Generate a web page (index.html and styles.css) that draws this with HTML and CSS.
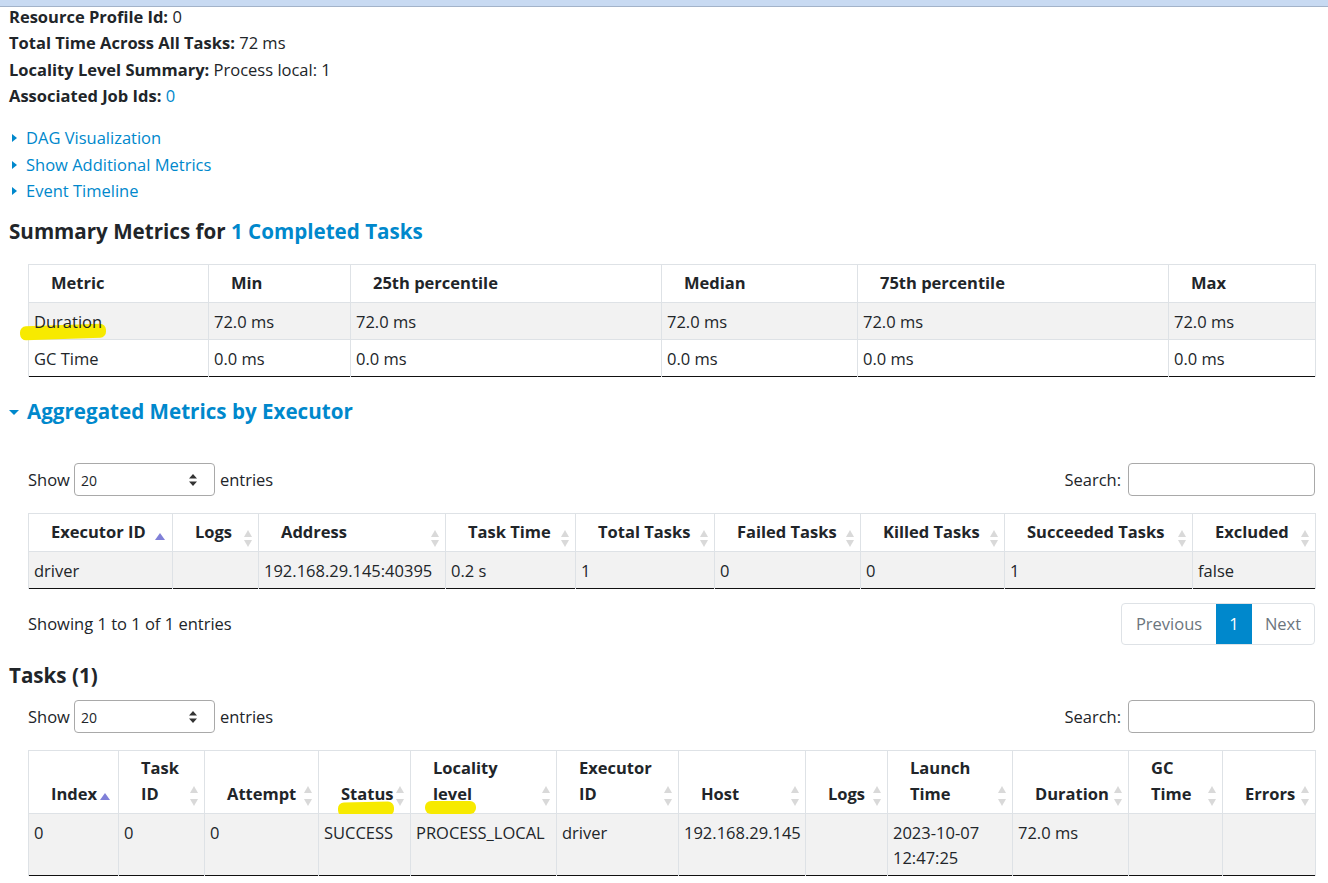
FILE: index.html
```html
<!DOCTYPE html>
<html lang="en">
<head>
<meta charset="utf-8">
<title>Stage details</title>
<link rel="stylesheet" href="styles.css">
</head>
<body>
<div class="topbar"></div>
<main class="page">
  <ul class="summary">
    <li><strong>Resource Profile Id:</strong> 0</li>
    <li><strong>Total Time Across All Tasks:</strong> 72 ms</li>
    <li><strong>Locality Level Summary:</strong> Process local: 1</li>
    <li><strong>Associated Job Ids:</strong> <a href="#">0</a></li>
  </ul>

  <ul class="toggles">
    <li><span class="arrow-right"></span><a href="#">DAG Visualization</a></li>
    <li><span class="arrow-right"></span><a href="#">Show Additional Metrics</a></li>
    <li><span class="arrow-right"></span><a href="#">Event Timeline</a></li>
  </ul>

  <h4 class="section-title first">Summary Metrics for <a href="#">1 Completed Tasks</a></h4>

  <div class="indent">
    <table class="grid metrics">
      <thead>
        <tr><th>Metric</th><th>Min</th><th>25th percentile</th><th>Median</th><th>75th percentile</th><th>Max</th></tr>
      </thead>
      <tbody>
        <tr class="odd"><td class="marked">Duration<span class="mark mark-duration"></span></td><td>72.0 ms</td><td>72.0 ms</td><td>72.0 ms</td><td>72.0 ms</td><td>72.0 ms</td></tr>
        <tr><td>GC Time</td><td>0.0 ms</td><td>0.0 ms</td><td>0.0 ms</td><td>0.0 ms</td><td>0.0 ms</td></tr>
      </tbody>
    </table>
  </div>

  <h4 class="section-title agg"><span class="arrow-down"></span><a href="#">Aggregated Metrics by Executor</a></h4>

  <div class="indent">
    <div class="controls controls-agg">
      <label class="length">Show
        <span class="select"><span class="select-value">20</span>
          <svg class="select-arrows" width="8" height="12" viewBox="0 0 8 12"><path d="M4 0 L8 4.5 L0 4.5 Z M4 12 L8 7.5 L0 7.5 Z" fill="#333"/></svg>
        </span>
        entries</label>
      <label class="search">Search: <span class="input"></span></label>
    </div>

    <table class="grid executors sortable">
      <thead>
        <tr>
          <th class="asc">Executor ID</th><th class="sorting">Logs</th><th class="sorting">Address</th><th class="sorting">Task Time</th><th class="sorting">Total Tasks</th><th class="sorting">Failed Tasks</th><th class="sorting">Killed Tasks</th><th class="sorting">Succeeded Tasks</th><th class="sorting">Excluded</th>
        </tr>
      </thead>
      <tbody>
        <tr class="odd"><td>driver</td><td></td><td>192.168.29.145:40395</td><td>0.2 s</td><td>1</td><td>0</td><td>0</td><td>1</td><td>false</td></tr>
      </tbody>
    </table>

    <div class="info-row">
      <div class="info">Showing 1 to 1 of 1 entries</div>
      <nav class="pager">
        <span class="page-btn">Previous</span><span class="page-btn active">1</span><span class="page-btn">Next</span>
      </nav>
    </div>
  </div>

  <h4 class="section-title tasks">Tasks (1)</h4>

  <div class="indent">
    <div class="controls controls-tasks">
      <label class="length">Show
        <span class="select"><span class="select-value">20</span>
          <svg class="select-arrows" width="8" height="12" viewBox="0 0 8 12"><path d="M4 0 L8 4.5 L0 4.5 Z M4 12 L8 7.5 L0 7.5 Z" fill="#333"/></svg>
        </span>
        entries</label>
      <label class="search">Search: <span class="input"></span></label>
    </div>

    <table class="grid taskgrid sortable">
      <thead>
        <tr>
          <th class="asc">Index</th><th class="sorting">Task ID</th><th class="sorting">Attempt</th><th class="sorting marked">Status<span class="mark mark-status"></span></th><th class="sorting marked">Locality level<span class="mark mark-level"></span></th><th class="sorting">Executor ID</th><th class="sorting">Host</th><th class="sorting">Logs</th><th class="sorting">Launch Time</th><th class="sorting">Duration</th><th class="sorting">GC Time</th><th class="sorting">Errors</th>
        </tr>
      </thead>
      <tbody>
        <tr class="odd"><td>0</td><td>0</td><td>0</td><td>SUCCESS</td><td>PROCESS_LOCAL</td><td>driver</td><td>192.168.29.145</td><td></td><td>2023-10-07 12:47:25</td><td>72.0 ms</td><td></td><td></td></tr>
      </tbody>
    </table>
  </div>
</main>
</body>
</html>
```

FILE: styles.css
```css
* { box-sizing: border-box; }

html, body {
  margin: 0;
  padding: 0;
  background: #ffffff;
}

body {
  font-family: "Open Sans", "Noto Sans", "Liberation Sans", sans-serif;
  font-size: 16.5px;
  color: #212529;
}

a {
  color: #0088cc;
  text-decoration: none;
}

.topbar {
  position: absolute;
  top: 0;
  left: 0;
  right: 0;
  height: 7px;
  background: #c8daf2;
  border-bottom: 1px solid #a3b3c9;
  z-index: 5;
}

.page {
  padding: 4px 13px 0 9px;
}

.summary,
.toggles {
  list-style: none;
  margin: 0;
  padding: 0;
}

.summary li {
  line-height: 26.3px;
}

.summary strong {
  font-weight: 700;
}

.toggles {
  margin-top: 16px;
}

.toggles li {
  display: flex;
  align-items: center;
  line-height: 26.5px;
}

.arrow-right {
  display: inline-block;
  width: 0;
  height: 0;
  margin: 0 9px 0 3px;
  border-top: 4.5px solid transparent;
  border-bottom: 4.5px solid transparent;
  border-left: 5px solid #0088cc;
}

.arrow-down {
  display: inline-block;
  width: 0;
  height: 0;
  margin: 0 8px 0 0;
  border-left: 5px solid transparent;
  border-right: 5px solid transparent;
  border-top: 5px solid #0088cc;
  vertical-align: middle;
  position: relative;
  top: -1px;
}

.section-title {
  margin: 0;
  font-size: 20.6px;
  font-weight: 700;
  line-height: 26px;
  color: #212529;
}

.section-title.first { margin-top: 13px; }
.section-title.agg { margin-top: 21px; }
.section-title.tasks { margin-top: 17px; }

.indent {
  padding-left: 19px;
}

.metrics { margin-top: 20px; }

/* tables */
.grid {
  width: 100%;
  table-layout: fixed;
  border-collapse: collapse;
  border: 1px solid #dee2e6;
  border-bottom: 1px solid #111111;
}

.grid th {
  position: relative;
  text-align: left;
  font-weight: 700;
  line-height: 26px;
  padding: 4px 30px 6px 22px;
  border: 1px solid #dee2e6;
  border-bottom: 1px solid #dee2e6;
  vertical-align: bottom;
}

.metrics th,
.executors th { padding-top: 5px; }

.grid td {
  position: relative;
  line-height: 25px;
  padding: 6px 5px 5px 5px;
  border-left: 1px solid #dee2e6;
  border-right: 1px solid #dee2e6;
  border-top: 1px solid #dee2e6;
  vertical-align: top;
}

.grid tr.odd td {
  background: #f2f2f2;
}

.metrics th { padding-right: 8px; }

.metrics th:nth-child(1) { width: 180px; }
.metrics th:nth-child(2) { width: 142px; }
.metrics th:nth-child(3) { width: 311px; }
.metrics th:nth-child(4) { width: 196px; }
.metrics th:nth-child(5) { width: 311px; }
.metrics th:nth-child(6) { width: 147px; }

.executors th { white-space: nowrap; }
.executors th:nth-child(1) { width: 144px; }
.executors th:nth-child(2) { width: 86px; }
.executors th:nth-child(3) { width: 187px; }
.executors th:nth-child(4) { width: 130px; }
.executors th:nth-child(5) { width: 139px; }
.executors th:nth-child(6) { width: 146px; }
.executors th:nth-child(7) { width: 144px; }
.executors th:nth-child(8) { width: 188px; }
.executors th:nth-child(9) { width: 123px; }

.taskgrid th:nth-child(1) { width: 90px; }
.taskgrid th:nth-child(2) { width: 86px; }
.taskgrid th:nth-child(3) { width: 114px; }
.taskgrid th:nth-child(4) { width: 92px; }
.taskgrid th:nth-child(5) { width: 146px; }
.taskgrid th:nth-child(6) { width: 122px; }
.taskgrid th:nth-child(7) { width: 127px; }
.taskgrid th:nth-child(8) { width: 82px; }
.taskgrid th:nth-child(9) { width: 125px; }
.taskgrid th:nth-child(10) { width: 116px; }
.taskgrid th:nth-child(11) { width: 94px; }
.taskgrid th:nth-child(12) { width: 93px; }

.taskgrid th { white-space: normal; }
.taskgrid th:nth-child(1),
.taskgrid th:nth-child(3),
.taskgrid th:nth-child(4),
.taskgrid th:nth-child(7),
.taskgrid th:nth-child(8),
.taskgrid th:nth-child(10),
.taskgrid th:nth-child(12) { white-space: nowrap; }

/* sort indicators */
.sortable th.sorting::before,
.sortable th.sorting::after,
.sortable th.asc::after {
  content: "";
  position: absolute;
  right: 6px;
  width: 0;
  height: 0;
  border-left: 4px solid transparent;
  border-right: 4px solid transparent;
}

.sortable th.sorting::before {
  bottom: 14px;
  border-bottom: 7px solid #d9d9d9;
}

.sortable th.sorting::after {
  bottom: 4px;
  border-top: 7px solid #d9d9d9;
}

.taskgrid.sortable th.sorting::before { bottom: 20px; }
.taskgrid.sortable th.sorting::after { bottom: 7px; }

.sortable th.asc::after {
  right: 7px;
  bottom: 11px;
  border-left-width: 5px;
  border-right-width: 5px;
  border-bottom: 7px solid #8080d8;
}

.taskgrid.sortable th.asc::after {
  right: 8px;
  bottom: 13px;
}

/* highlighter marks: drawn behind the cell text */
.grid .marked {
  z-index: 0;
}

.mark {
  position: absolute;
  z-index: -1;
  background: #f7ea00;
  border-radius: 6px;
  pointer-events: none;
}

.mark-duration {
  left: -9px;
  top: 22px;
  width: 86px;
  height: 14px;
  transform: rotate(-2deg);
}

.mark-status {
  left: 19px;
  top: 51px;
  width: 56px;
  height: 14px;
  transform: rotate(-1deg);
}

.mark-level {
  left: 14px;
  top: 50px;
  width: 51px;
  height: 13px;
}

/* controls */
.controls {
  display: flex;
  align-items: center;
  justify-content: space-between;
  margin-bottom: 17px;
}

.controls-agg { margin-top: 39px; }
.controls-tasks { margin-top: 12px; }

.length,
.search {
  display: flex;
  align-items: center;
}

.select {
  position: relative;
  display: flex;
  align-items: center;
  justify-content: space-between;
  width: 141px;
  height: 33px;
  margin: 0 5px 0 4px;
  padding: 2px 17px 0 6px;
  border: 1px solid #a9a9a9;
  border-radius: 4px;
  background: #ffffff;
}

.select-value {
  font-size: 14px;
  color: #212529;
}

.select-arrows {
  display: block;
}

.search .input {
  display: block;
  width: 187px;
  height: 33px;
  margin-left: 7px;
  border: 1px solid #a9a9a9;
  border-radius: 4px;
  background: #ffffff;
}

.info-row {
  display: flex;
  align-items: center;
  justify-content: space-between;
  margin-top: 14px;
}

.pager {
  display: flex;
  height: 42px;
  border: 1px solid #dee2e6;
  border-radius: 4px;
  overflow: hidden;
  margin-right: 0;
}

.page-btn {
  display: flex;
  align-items: center;
  justify-content: center;
  padding: 0 14px;
  color: #6c757d;
}

.page-btn:first-child { width: 94px; }
.page-btn.active {
  width: 36px;
  padding: 0;
  background: #0088cc;
  color: #ffffff;
}
.page-btn:last-child { width: 62px; }
```
